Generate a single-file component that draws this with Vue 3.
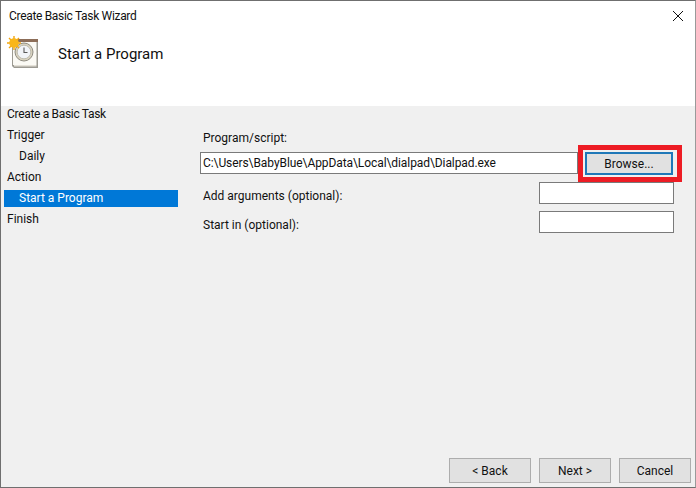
<script setup>
const steps = [
  { label: 'Create a Basic Task', tight: true },
  { label: 'Trigger' },
  { label: 'Daily', sub: true },
  { label: 'Action' },
  { label: 'Start a Program', sub: true, active: true },
  { label: 'Finish' },
]
</script>

<template>
  <div class="window">
    <div class="titlebar">
      <span class="tight">Create Basic Task Wizard</span>
      <svg class="close" width="12" height="12" viewBox="0 0 12 12"><path d="M1 1l10 10M11 1L1 11" stroke="#111" stroke-width="1" fill="none" /></svg>
    </div>
    <header class="header">
      <svg class="logo" width="32" height="33" viewBox="0 0 32 33">
        <path d="M5 4h26v28H7l-2-2z" fill="#9c9a92" />
        <path d="M6 6h23.500v23H6z" fill="#fbfaf5" />
        <path d="M7 29h22.500v1.500H7z" fill="#e4e1d8" />
        <path d="M5 3h26v3H5z" fill="#8c6d58" />
        <circle cx="17" cy="16" r="9" fill="#d9d3c0" stroke="#8f8c82" stroke-width="1" />
        <circle cx="17" cy="16" r="6.800" fill="#f1f4f8" stroke="#b5b2a6" stroke-width=".8" />
        <path d="M17 11.500V16.500h3.500" stroke="#5a5a5a" stroke-width="1.100" fill="none" />
        <g stroke="#f2a50f" stroke-width="1.400">
          <path d="M7 0v14M0 7h14M2 2l10 10M12 2L2 12" />
        </g>
        <circle cx="7" cy="7" r="4.800" fill="#f9b61a" />
      </svg>
      <h1>Start a Program</h1>
    </header>
    <div class="body">
      <aside class="steps">
        <div v-for="s in steps" :key="s.label" class="step" :class="{ sub: s.sub, active: s.active }">
          <span :class="{ tight: s.tight }">{{ s.label }}</span>
        </div>
      </aside>
      <main class="form">
        <label class="lbl-top">Program/script:</label>
        <div class="row-program">
          <div class="field grow path">C:\Users\BabyBlue\AppData\Local\dialpad\Dialpad.exe</div>
          <div class="browse-wrap">
            <button class="btn browse">Browse...</button>
            <div class="mark"></div>
          </div>
        </div>
        <div class="row-arg first">
          <label>Add arguments (optional):</label>
          <div class="field short"></div>
        </div>
        <div class="row-arg">
          <label>Start in (optional):</label>
          <div class="field short"></div>
        </div>
      </main>
    </div>
    <footer class="footer">
      <button class="btn back">&lt; Back</button>
      <button class="btn next">Next &gt;</button>
      <button class="btn next">Cancel</button>
    </footer>
  </div>
</template>

<style>
html, body { margin: 0; background: #f0f0f0; }
</style>

<style scoped>
.window {
  box-sizing: border-box;
  width: 696px;
  height: 488px;
  display: flex;
  flex-direction: column;
  background: #f0f0f0;
  border: 1px solid #6f6f6f;
  border-right-color: #9a9a9a;
  font-family: Roboto, "Open Sans", sans-serif;
  font-size: 12px;
  color: #111;
}
.tight { letter-spacing: -0.32px; }
.path { letter-spacing: -0.08px; }
.titlebar {
  height: 29px;
  flex: none;
  display: flex;
  align-items: center;
  justify-content: space-between;
  padding: 0 11px 0 8px;
  background: #fff;
}
.close { flex: none; }
.header {
  height: 76px;
  flex: none;
  display: flex;
  align-items: flex-start;
  background: #fff;
}
.logo { margin: 6px 0 0 6px; flex: none; }
h1 {
  margin: 13px 0 0 19px;
  font-size: 15px;
  font-weight: 400;
  line-height: 22px;
}
.body { flex: 1; display: flex; min-height: 0; }
.steps { width: 177px; flex: none; margin-top: -3px; padding: 0 0 0 3px; box-sizing: border-box; }
.step {
  height: 21px;
  display: flex;
  align-items: center;
  padding-left: 3px;
}
.step.sub { padding-left: 15px; }
.step.active span {
  display: block;
  width: 100%;
}
.step.active {
  box-sizing: border-box;
  height: 17px;
  margin: 3px 0 1px;
  padding-bottom: 1px;
  background: #0078d7;
  color: #fff;
}
.form {
  flex: 1;
  padding: 23px 21px 0 22px;
  min-width: 0;
}
.lbl-top { display: block; padding-left: 3px; line-height: 18px; height: 23px; }
.field {
  box-sizing: border-box;
  height: 22px;
  border: 1px solid #7a7a7a;
  background: #fff;
  line-height: 20px;
  padding-left: 2px;
  white-space: nowrap;
  overflow: hidden;
}
.grow { flex: 1; min-width: 0; }
.short { width: 135px; flex: none; }
.row-program { display: flex; align-items: flex-start; }
.browse-wrap { position: relative; margin: 0 1px 0 7px; flex: none; }
.btn {
  box-sizing: border-box;
  font: inherit;
  color: inherit;
  background: #e1e1e1;
  border: 1px solid #adadad;
  padding: 0;
  height: 25px;
  width: 72px;
}
.browse {
  display: block;
  width: 88px;
  height: 23px;
  border: 2px solid #1f78b8;
}
.mark {
  position: absolute;
  left: -7px;
  top: -7px;
  right: -9px;
  bottom: -7px;
  border: 5px solid #ed1c24;
}
.row-arg {
  display: flex;
  justify-content: space-between;
  align-items: center;
  padding-left: 3px;
  margin-top: 7px;
}
.row-arg label { padding-top: 5px; }
.footer {
  height: 29px;
  flex: none;
  display: flex;
  justify-content: flex-end;
  gap: 8px;
  padding-right: 4px;
}
.back { width: 82px; }
</style>
